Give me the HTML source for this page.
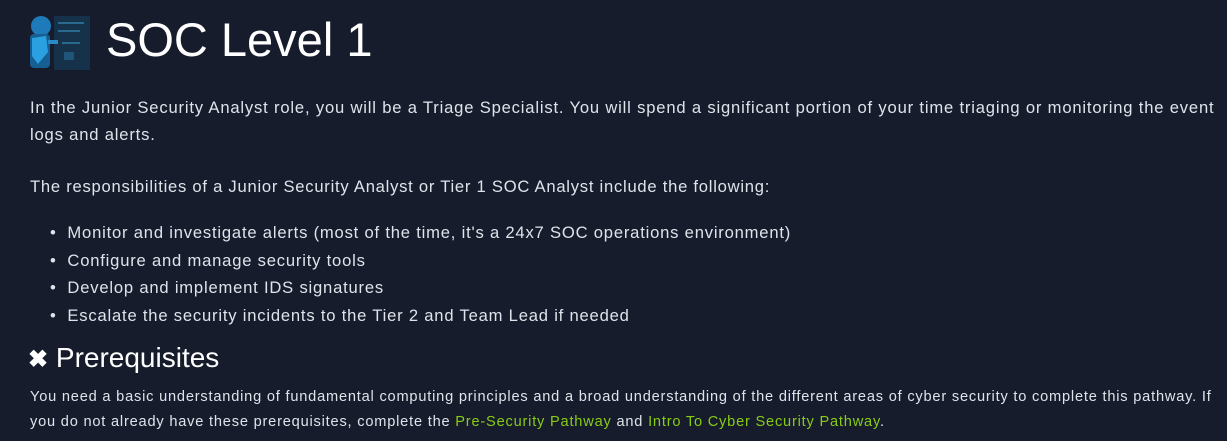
<!DOCTYPE html>
<html><head><style>
html,body{margin:0;padding:0;background:#161c2c;width:1227px;height:441px;overflow:hidden}
body{font-family:"Liberation Sans",sans-serif;color:#dfe3ea;position:relative}
.t{position:absolute;white-space:nowrap}
</style></head><body>
<svg style="position:absolute;left:28px;top:12px" width="62" height="58" viewBox="0 0 62 58">
<rect x="26" y="4" width="36" height="54" fill="#16324a"/>
<rect x="30" y="10" width="26" height="2" fill="#2a6a90"/>
<rect x="30" y="18" width="22" height="2" fill="#2a6a90"/>
<rect x="34" y="30" width="18" height="2" fill="#2a6a90"/>
<rect x="36" y="40" width="10" height="8" fill="#1f5578"/>
<ellipse cx="13" cy="14" rx="10" ry="10" fill="#1e7ab8"/>
<rect x="2" y="22" width="20" height="34" rx="4" fill="#155f92"/>
<path d="M4 26 L18 24 L20 40 L10 52 L4 44 Z" fill="#2aa0e0"/>
<rect x="20" y="28" width="10" height="4" fill="#2a8ac8"/>
</svg>
<div class="t" style="left:106px;top:12px;font-size:47px;color:#fff">SOC Level 1</div>
<div class="t" style="left:30px;top:94px;font-size:16.6px;line-height:27px;letter-spacing:0.82px">In the Junior Security Analyst role, you will be a Triage Specialist. You will spend a significant portion of your time triaging or monitoring the event<br>logs and alerts.</div>
<div class="t" style="left:30px;top:177px;font-size:16.6px;letter-spacing:0.75px">The responsibilities of a Junior Security Analyst or Tier 1 SOC Analyst include the following:</div>
<div class="t" style="left:50px;top:219px;font-size:16.6px;line-height:27.5px;letter-spacing:0.8px">
<div>•&nbsp;&nbsp;Monitor and investigate alerts (most of the time, it's a 24x7 SOC operations environment)</div>
<div>•&nbsp;&nbsp;Configure and manage security tools</div>
<div>•&nbsp;&nbsp;Develop and implement IDS signatures</div>
<div>•&nbsp;&nbsp;Escalate the security incidents to the Tier 2 and Team Lead if needed</div>
</div>
<div class="t" style="left:28px;top:342px;font-size:28px;color:#fff"><b style="font-size:24px">✖</b> Prerequisites</div>
<div class="t" style="left:30px;top:385px;font-size:14.6px;line-height:25px;letter-spacing:0.8px">You need a basic understanding of fundamental computing principles and a broad understanding of the different areas of cyber security to complete this pathway. If<br>you do not already have these prerequisites, complete the <span style="color:#88cc14">Pre-Security Pathway</span> and <span style="color:#88cc14">Intro To Cyber Security Pathway</span>.</div>
</body></html>
